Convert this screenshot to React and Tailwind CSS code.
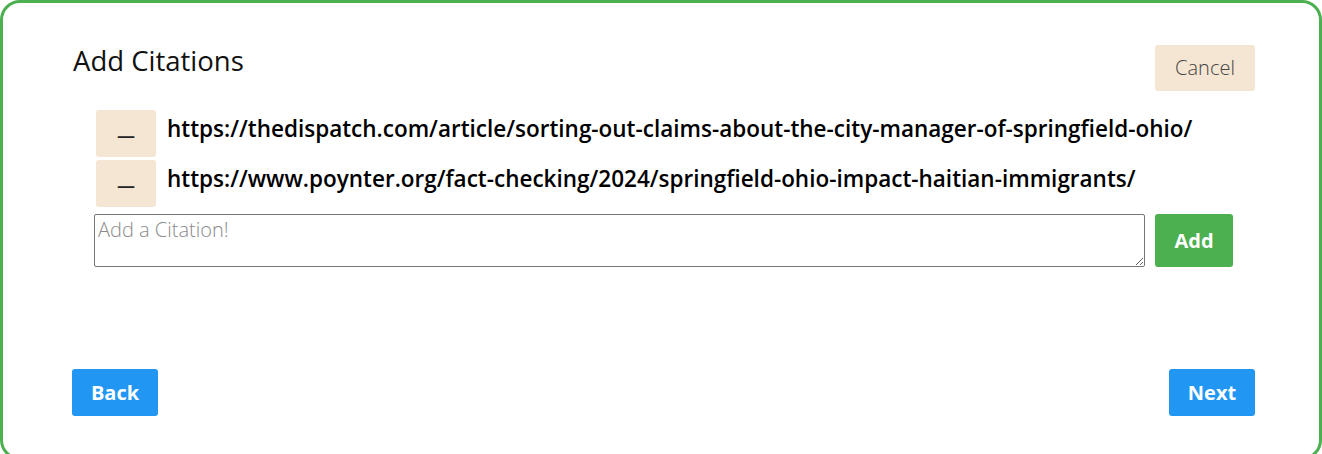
import { useState } from 'react'

const citations = [
  'https://thedispatch.com/article/sorting-out-claims-about-the-city-manager-of-springfield-ohio/',
  'https://www.poynter.org/fact-checking/2024/springfield-ohio-impact-haitian-immigrants/',
]

export default function App() {
  const [value, setValue] = useState('')

  return (
    <div className="h-[460px] w-full rounded-[20px] border-[3px] border-[#4caf50] bg-white pl-[69px] pr-[64px] pt-[42px] font-['Open_Sans',sans-serif] text-black">
      <div className="flex items-start justify-between">
        <h2 className="ml-[1px] mt-[2px] text-[27.5px] font-normal leading-[28px] text-[#111]">Add Citations</h2>
        <button className="h-[46px] w-[100px] rounded-[3px] bg-[#f5e6d3] text-[20px] font-light text-[#444]">
          Cancel
        </button>
      </div>

      <div className="mt-[19px] flex flex-col gap-[3px] pl-[24px]">
        {citations.map(c => (
          <div key={c} className="flex items-start gap-[11px]">
            <button className="h-[47px] w-[60px] shrink-0 rounded-[3px] bg-[#f5e6d3] pt-[4px] text-[18px] font-semibold text-[#222]">
              —
            </button>
            <span className="mt-[3px] text-[22.5px] font-semibold leading-[31px]">{c}</span>
          </div>
        ))}
      </div>

      <div className="mt-[7px] flex items-start gap-[10px] pl-[22px]">
        <textarea
          value={value}
          onChange={e => setValue(e.target.value)}
          placeholder="Add a Citation!"
          className="h-[53px] w-[1051px] rounded-[2px] border border-[#767676] px-[3px] pb-0 pt-[2px] text-[20px] font-light leading-[26px] placeholder:text-[#8a8a8a]"
        />
        <button className="h-[53px] w-[78px] rounded-[3px] bg-[#4caf50] text-[20px] font-bold text-white">
          Add
        </button>
      </div>

      <div className="mt-[102px] flex justify-between">
        <button className="h-[47px] w-[86px] rounded-[3px] bg-[#2196f3] text-[20px] font-bold text-white">Back</button>
        <button className="h-[47px] w-[86px] rounded-[3px] bg-[#2196f3] text-[20px] font-bold text-white">Next</button>
      </div>
    </div>
  )
}
